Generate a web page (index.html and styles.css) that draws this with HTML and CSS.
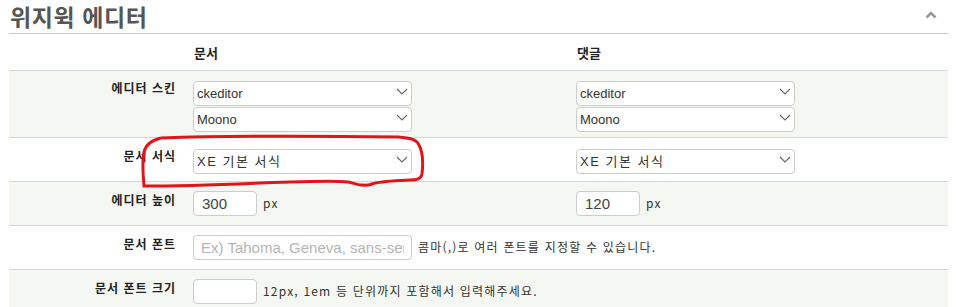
FILE: index.html
```html
<!DOCTYPE html>
<html lang="ko">
<head>
    <meta charset="UTF-8">
    <title>위지윅 에디터</title>
    <link rel="stylesheet" href="styles.css">
</head>
<body>
    <div class="section">
        <div class="title-bar">
            <h2>위지윅 에디터</h2>
            <svg class="fold" width="12" height="8" viewBox="0 0 12 8"><polyline points="1.5,6.5 6,2 10.5,6.5" fill="none" stroke="#999" stroke-width="2.6"/></svg>
        </div>

        <div class="row head">
            <div></div>
            <div class="col-title">문서</div>
            <div class="col-title">댓글</div>
        </div>

        <div class="row stripe first">
            <div class="label">에디터 스킨</div>
            <div class="stack">
                <div class="sel"><select><option>ckeditor</option></select><svg viewBox="0 0 12 7"><polyline points="1,1 6,6 11,1"/></svg></div>
                <div class="sel"><select><option>Moono</option></select><svg viewBox="0 0 12 7"><polyline points="1,1 6,6 11,1"/></svg></div>
            </div>
            <div class="stack">
                <div class="sel"><select><option>ckeditor</option></select><svg viewBox="0 0 12 7"><polyline points="1,1 6,6 11,1"/></svg></div>
                <div class="sel"><select><option>Moono</option></select><svg viewBox="0 0 12 7"><polyline points="1,1 6,6 11,1"/></svg></div>
            </div>
        </div>

        <div class="row">
            <div class="label">문서 서식</div>
            <div class="sel"><select class="ko"><option>XE 기본 서식</option></select><svg viewBox="0 0 12 7"><polyline points="1,1 6,6 11,1"/></svg></div>
            <div class="sel"><select class="ko"><option>XE 기본 서식</option></select><svg viewBox="0 0 12 7"><polyline points="1,1 6,6 11,1"/></svg></div>
        </div>

        <div class="row stripe">
            <div class="label">에디터 높이</div>
            <div class="inline"><input type="text" class="small" value="300"><span class="hint">px</span></div>
            <div class="inline"><input type="text" class="small" value="120"><span class="hint">px</span></div>
        </div>

        <div class="row">
            <div class="label">문서 폰트</div>
            <div class="inline wide"><input type="text" class="long" placeholder="Ex) Tahoma, Geneva, sans-serif"><span class="hint">콤마(,)로 여러 폰트를 지정할 수 있습니다.</span></div>
        </div>

        <div class="row stripe">
            <div class="label">문서 폰트 크기</div>
            <div class="inline wide"><input type="text" class="small"><span class="hint">12px, 1em 등 단위까지 포함해서 입력해주세요.</span></div>
        </div>
    </div>

    <!-- red marker drawn over the screenshot -->
    <svg class="marker" width="959" height="307" viewBox="0 0 959 307">
        <path d="M161 138 C 220 136, 320 136, 398 137 C 410 138, 416 139, 419 145 C 423 152, 423 165, 422 174 C 421 179, 417 180, 410 180 C 392 181, 380 181, 372 184 C 364 187, 356 184, 348 182 C 330 180, 300 182, 260 183 C 210 185, 170 186, 144 186 C 143 175, 142 162, 144 152 C 146 144, 152 140, 161 138" fill="none" stroke="#e3131b" stroke-width="3"/>
    </svg>
</body>
</html>
```

FILE: styles.css
```css
body {
    margin: 0;
    position: relative;
    font-family: "Noto Sans CJK KR", "Liberation Sans", sans-serif;
    color: #333;
    background: #fff;
}
.section {
    width: 939px;
    margin-left: 9px;
}
.title-bar {
    display: flex;
    justify-content: space-between;
    align-items: center;
    height: 33px;
    border-bottom: 1px solid #ccc;
}
.title-bar h2 {
    margin: 0 0 0 1px;
    font-size: 23px;
    font-weight: bold;
    color: #555;
    line-height: 33px;
    letter-spacing: 0.6px;
}
.fold {
    margin-right: 11px;
    margin-bottom: 3px;
}
.row {
    display: grid;
    grid-template-columns: 184px 383px 1fr;
    padding: 9px 0;
    border-bottom: 1px solid #d2d9d2;
}
.row.first {
    padding: 8px 0 7px;
}
.row.head {
    height: 18px;
    align-items: center;
}
.stripe {
    background: #f5f7f2;
}
.col-title {
    font-size: 13px;
    font-weight: bold;
    color: #222;
    padding-left: 1px;
}
.label {
    text-align: right;
    padding-right: 17px;
    font-size: 12px;
    font-weight: bold;
    letter-spacing: 1px;
    line-height: 18px;
    color: #222;
}
.stack {
    display: flex;
    flex-direction: column;
    gap: 1px;
}
.sel {
    position: relative;
    width: 219px;
    height: 25px;
}
.sel select {
    appearance: none;
    -webkit-appearance: none;
    width: 100%;
    height: 25px;
    margin: 0;
    padding: 0 3px;
    border: 1px solid #ccc;
    border-radius: 4px;
    background: #fff;
    font-family: "Liberation Sans", sans-serif;
    font-size: 13px;
    color: #333;
}
.sel select.ko {
    font-family: "Liberation Sans", "Noto Sans CJK KR", sans-serif;
    font-size: 13px;
    letter-spacing: 1.5px;
}
.sel svg {
    position: absolute;
    right: 4px;
    top: 9px;
    width: 12px;
    height: 7px;
    fill: none;
    stroke: #666;
    stroke-width: 1.1;
}
.inline {
    display: flex;
    align-items: center;
}
.wide {
    grid-column: 2 / 4;
}
input {
    height: 25px;
    box-sizing: border-box;
    margin: 0;
    border: 1px solid #ccc;
    border-radius: 4px;
    background: #fff;
    font-family: "Liberation Sans", sans-serif;
    font-size: 15px;
    color: #444;
}
input.small {
    width: 64px;
    padding: 0 8px;
}
input.long {
    width: 219px;
    padding: 0 7px;
}
input::placeholder {
    color: #b5b5b5;
}
.hint {
    margin-left: 6px;
    font-size: 12px;
    letter-spacing: 1.2px;
    color: #333;
    padding-bottom: 2px;
}
.marker {
    position: absolute;
    left: 0;
    top: 0;
    pointer-events: none;
}
```
